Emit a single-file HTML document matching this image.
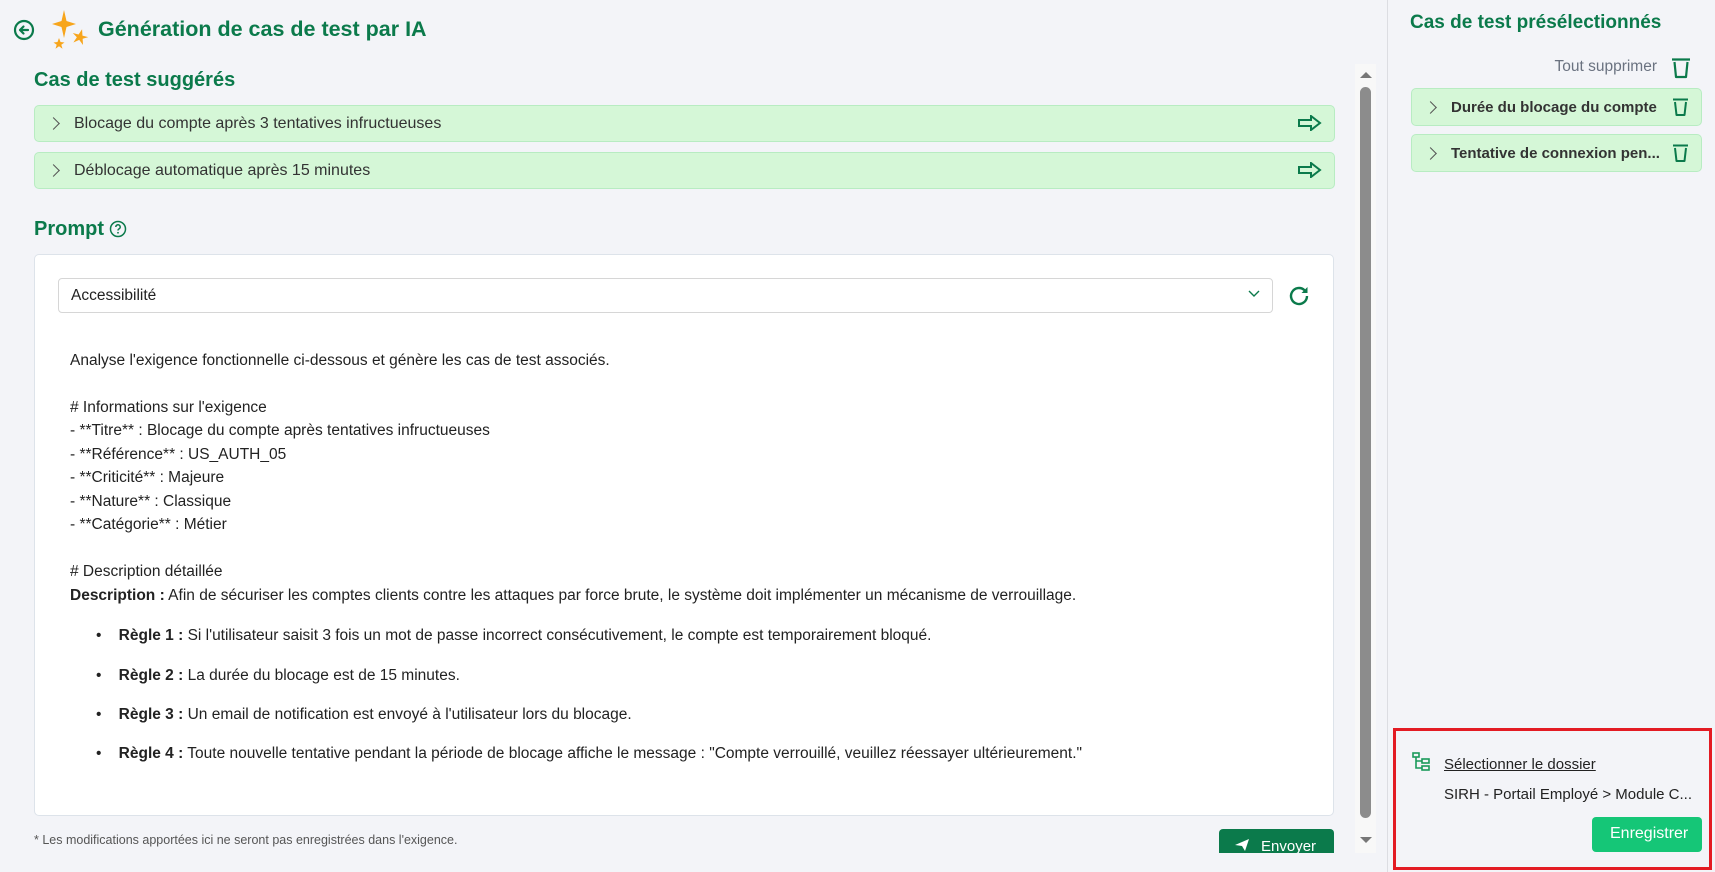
<!DOCTYPE html>
<html><head><meta charset="utf-8"><style>
*{box-sizing:border-box;margin:0;padding:0}
body{width:1715px;height:872px;overflow:hidden;background:#f3f4f8;font-family:"Liberation Sans",sans-serif;color:#222;position:relative}
.abs{position:absolute}
.g{color:#0b7a4b}
.row{position:absolute;background:#d5f7d7;border:1px solid #b8ecc2;border-radius:5px;font-size:16px;color:#333;display:flex;align-items:center}
.row .chev{width:9px;height:9px;border-right:1.5px solid #555;border-top:1.5px solid #555;transform:rotate(45deg);margin-left:14px;margin-right:16px}
.txt{position:absolute;left:70px;font-size:15.5px;color:#222;white-space:nowrap}
</style></head><body>
<svg class="abs" style="left:13px;top:19px" width="22" height="22" viewBox="0 0 22 22"><circle cx="11" cy="11" r="9" fill="none" stroke="#0b7a4b" stroke-width="2.2"/><path d="M15 11H7M10.5 7.5L7 11l3.5 3.5" fill="none" stroke="#0b7a4b" stroke-width="2.2" stroke-linecap="round" stroke-linejoin="round"/></svg>
<svg class="abs" style="left:48px;top:9px" width="42" height="40" viewBox="0 0 42 40"><path d="M16 1 L18.5 12 L28 15 L18.5 18 L16 29 L13.5 18 L4 15 L13.5 12Z" fill="#f7a51c"/><path d="M32 20l2 6 6 0-5 3 2 6-5-4-5 4 2-6-5-3 6 0z" fill="#f7a51c" transform="rotate(15 32 28)"/><path d="M11 29l1.5 4 4 .5-3.2 2.2 1.2 4-3.5-2.5-3.5 2.5 1.2-4-3.2-2.2 4-.5z" fill="#f7a51c"/></svg>
<div class="abs g" style="left:98px;top:17px;font-size:21.5px;font-weight:bold">Génération de cas de test par IA</div>
<div class="abs g" style="left:34px;top:69px;font-size:20px;font-weight:bold">Cas de test suggérés</div>
<div class="row" style="left:34px;top:105px;width:1301px;height:37px"><span class="chev"></span>Blocage du compte après 3 tentatives infructueuses</div>
<div class="row" style="left:34px;top:152px;width:1301px;height:37px"><span class="chev"></span>Déblocage automatique après 15 minutes</div>
<svg class="abs" style="left:1298px;top:115px" width="24" height="16" viewBox="0 0 24 16"><path d="M1 5H13V1L22 8L13 15V11H1Z" fill="none" stroke="#0b7a4b" stroke-width="2"/></svg>
<svg class="abs" style="left:1298px;top:162px" width="24" height="16" viewBox="0 0 24 16"><path d="M1 5H13V1L22 8L13 15V11H1Z" fill="none" stroke="#0b7a4b" stroke-width="2"/></svg>
<div class="abs g" style="left:34px;top:218px;font-size:20px;font-weight:bold">Prompt</div>
<svg class="abs" style="left:109px;top:220px" width="18" height="18" viewBox="0 0 18 18"><circle cx="9" cy="9" r="7.5" fill="none" stroke="#0b7a4b" stroke-width="1.5"/><path d="M6.8 7a2.2 2.2 0 1 1 3 2c-.6.3-.8.7-.8 1.5" fill="none" stroke="#0b7a4b" stroke-width="1.5"/><circle cx="9" cy="12.8" r=".9" fill="#0b7a4b"/></svg>
<div class="abs" style="left:34px;top:254px;width:1300px;height:562px;background:#fff;border:1px solid #dde3ea;border-radius:5px"></div>
<div class="abs" style="left:58px;top:278px;width:1215px;height:35px;background:#fff;border:1px solid #d6d6d6;border-radius:4px;font-size:15.5px;padding:8px 12px;color:#222">Accessibilité</div>
<svg class="abs" style="left:1248px;top:290px" width="12" height="8" viewBox="0 0 12 8"><path d="M1 1l5 5 5-5" fill="none" stroke="#0b7a4b" stroke-width="1.4"/></svg>
<svg class="abs" style="left:1287px;top:284px" width="24" height="24" viewBox="0 0 24 24"><path d="M20 12a8 8 0 1 1-2.4-5.7" fill="none" stroke="#0b7a4b" stroke-width="2.4"/><path d="M20.5 3v6h-6z" fill="#0b7a4b"/></svg>
<div class="txt" style="top:352px">Analyse l'exigence fonctionnelle ci-dessous et génère les cas de test associés.</div>
<div class="txt" style="top:399px"># Informations sur l'exigence</div>
<div class="txt" style="top:422px">- **Titre** : Blocage du compte après tentatives infructueuses</div>
<div class="txt" style="top:446px">- **Référence** : US_AUTH_05</div>
<div class="txt" style="top:469px">- **Criticité** : Majeure</div>
<div class="txt" style="top:493px">- **Nature** : Classique</div>
<div class="txt" style="top:516px">- **Catégorie** : Métier</div>
<div class="txt" style="top:563px"># Description détaillée</div>
<div class="txt" style="top:587px"><b>Description :</b> Afin de sécuriser les comptes clients contre les attaques par force brute, le système doit implémenter un mécanisme de verrouillage.</div>
<div class="txt" style="top:627px;left:96px">•&nbsp;&nbsp;&nbsp;&nbsp;<b>Règle 1 :</b> Si l'utilisateur saisit 3 fois un mot de passe incorrect consécutivement, le compte est temporairement bloqué.</div>
<div class="txt" style="top:667px;left:96px">•&nbsp;&nbsp;&nbsp;&nbsp;<b>Règle 2 :</b> La durée du blocage est de 15 minutes.</div>
<div class="txt" style="top:706px;left:96px">•&nbsp;&nbsp;&nbsp;&nbsp;<b>Règle 3 :</b> Un email de notification est envoyé à l'utilisateur lors du blocage.</div>
<div class="txt" style="top:745px;left:96px">•&nbsp;&nbsp;&nbsp;&nbsp;<b>Règle 4 :</b> Toute nouvelle tentative pendant la période de blocage affiche le message : "Compte verrouillé, veuillez réessayer ultérieurement."</div>
<div class="abs" style="left:34px;top:833px;font-size:12.5px;color:#555">* Les modifications apportées ici ne seront pas enregistrées dans l'exigence.</div>
<div class="abs" style="left:1219px;top:829px;width:115px;height:24px;background:#0b7a4b;border-radius:4px 4px 0 0;overflow:hidden;color:#fff;font-size:15px;padding:9px 0 0 42px">Envoyer</div>
<svg class="abs" style="left:1234px;top:838px" width="16" height="14" viewBox="0 0 16 14"><path d="M1 7L15 1L11 13L8 8Z" fill="#fff"/></svg>
<div class="abs" style="left:1355px;top:64px;width:21px;height:789px;background:#f8f8f8"></div>
<svg class="abs" style="left:1359px;top:70px" width="14" height="9"><path d="M1 8L7 2L13 8Z" fill="#777"/></svg>
<div class="abs" style="left:1360px;top:87px;width:11px;height:731px;background:#8c8c8c;border-radius:6px"></div>
<svg class="abs" style="left:1359px;top:836px" width="14" height="9"><path d="M1 1L7 7L13 1Z" fill="#777"/></svg>
<div class="abs" style="left:1387px;top:0;width:1px;height:872px;background:#dcdde2"></div>
<div class="abs g" style="left:1410px;top:12px;font-size:19px;font-weight:bold">Cas de test présélectionnés</div>
<div class="abs" style="left:1500px;top:58px;width:157px;text-align:right;font-size:15.5px;color:#6a7280">Tout supprimer</div>
<svg class="abs" style="left:1671px;top:57px" width="20" height="22" viewBox="0 0 20 22"><path d="M1 2.5H19M3.5 5L5 20H15L16.5 5" fill="none" stroke="#0b7a4b" stroke-width="2.2" stroke-linejoin="round"/></svg>
<div class="row" style="left:1411px;top:88px;width:291px;height:38px;font-weight:bold;font-size:15px"><span class="chev"></span>Durée du blocage du compte</div>
<div class="row" style="left:1411px;top:134px;width:291px;height:38px;font-weight:bold;font-size:15px"><span class="chev"></span>Tentative de connexion pen...</div>
<svg class="abs" style="left:1672px;top:98px" width="17" height="18" viewBox="0 0 17 18"><path d="M1 1.5H16M3 4L4.5 17H12.5L14 4" fill="none" stroke="#0b7a4b" stroke-width="2" stroke-linejoin="round"/></svg>
<svg class="abs" style="left:1672px;top:144px" width="17" height="18" viewBox="0 0 17 18"><path d="M1 1.5H16M3 4L4.5 17H12.5L14 4" fill="none" stroke="#0b7a4b" stroke-width="2" stroke-linejoin="round"/></svg>
<div class="abs" style="left:1393px;top:728px;width:319px;height:142px;border:3px solid #e31b23"></div>
<svg class="abs" style="left:1412px;top:752px" width="18" height="20" viewBox="0 0 18 20"><rect x="1" y="1" width="6" height="4" fill="none" stroke="#1a9a5a" stroke-width="1.6"/><rect x="10" y="7" width="7" height="4" fill="none" stroke="#1a9a5a" stroke-width="1.6"/><rect x="10" y="14" width="7" height="4" fill="none" stroke="#1a9a5a" stroke-width="1.6"/><path d="M4 5V16H10M4 9H10" fill="none" stroke="#1a9a5a" stroke-width="1.6"/></svg>
<div class="abs" style="left:1444px;top:756px;font-size:15px;color:#222;text-decoration:underline">Sélectionner le dossier</div>
<div class="abs" style="left:1444px;top:786px;font-size:15px;color:#222">SIRH - Portail Employé &gt; Module C...</div>
<div class="abs" style="left:1592px;top:817px;width:110px;height:35px;background:#15c677;border-radius:4px;color:#fff;font-size:16px;padding:8px 0 0 18px">Enregistrer</div>
</body></html>
